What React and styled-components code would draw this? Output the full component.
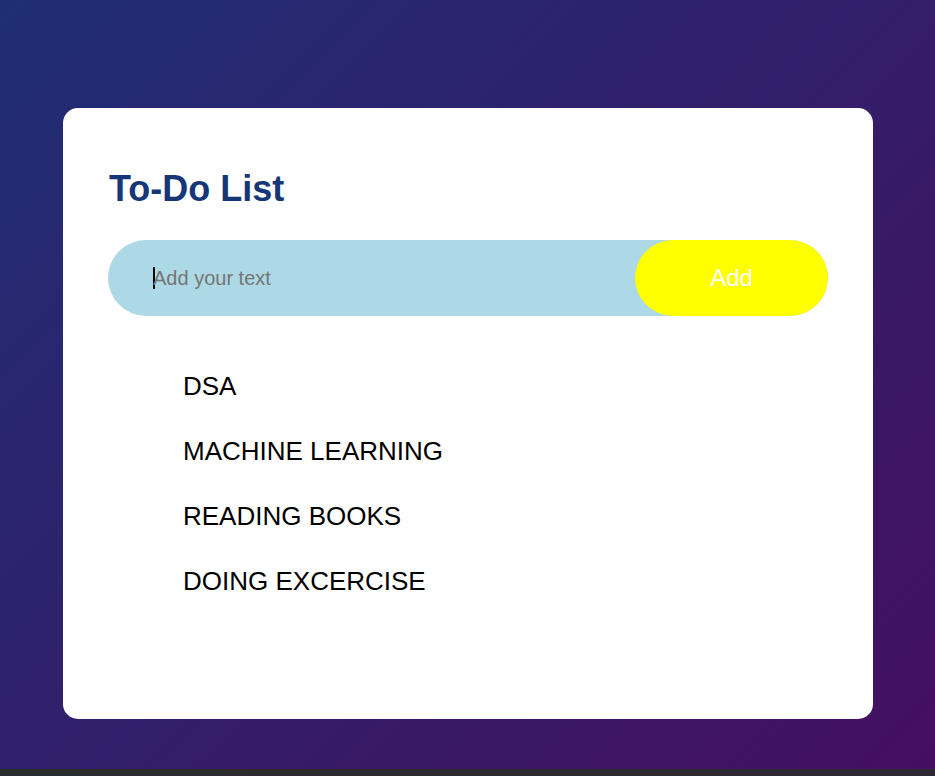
import React from "react";
import styled, { createGlobalStyle } from "styled-components";

const GlobalStyle = createGlobalStyle`
  * { box-sizing: border-box; }
  body {
    margin: 0;
    background: linear-gradient(90deg, #2b2d2c, #2c2733);
    font-family: "Liberation Sans", Arial, sans-serif;
  }
`;

const Page = styled.main`
  min-height: calc(100vh - 7px);
  padding: 108px 62px 50px 63px;
  background: linear-gradient(135deg, #1f2e74, #450f60);
`;

const Card = styled.section`
  max-width: 810px;
  margin: 0 auto;
  padding: 60px 45px 105px;
  border-radius: 15px;
  background: #fff;
`;

const Title = styled.h1`
  margin: 0 0 31px 1px;
  color: #153677;
  font-size: 36px;
  line-height: 41px;
`;

const AddForm = styled.form`
  display: flex;
  height: 76px;
  border-radius: 38px;
  background: #add8e6;
`;

const TextInput = styled.input`
  flex: 1;
  min-width: 0;
  padding: 0 0 0 45px;
  border: 0;
  outline: 0;
  background: transparent;
  color: #000;
  font: 20px "Liberation Sans", Arial, sans-serif;

  &::placeholder { color: #757575; }

  /* A bold caret while the field is empty */
  &:placeholder-shown:focus {
    caret-color: transparent;
    background: linear-gradient(#000, #000) 45px center / 2px 22px no-repeat;
  }
`;

const AddButton = styled.button`
  width: 193px;
  border: 0;
  border-radius: 38px;
  background: #ff0;
  color: #fff;
  font: 24px "Liberation Sans", Arial, sans-serif;
`;

const Tasks = styled.ul`
  margin: 38px 0 0;
  padding: 0 0 0 75px;
  list-style: none;
`;

const Task = styled.li`
  font-size: 26px;
  line-height: 65px;
`;

const tasks = ["DSA", "MACHINE LEARNING", "READING BOOKS", "DOING EXCERCISE"];

export default function App() {
  return (
    <>
      <GlobalStyle />
      <Page>
        <Card>
          <Title>To-Do List</Title>
          <AddForm onSubmit={(e) => e.preventDefault()}>
            <TextInput autoFocus type="text" placeholder="Add your text" aria-label="Add your text" />
            <AddButton type="submit">Add</AddButton>
          </AddForm>
          <Tasks>
            {tasks.map((task) => <Task key={task}>{task}</Task>)}
          </Tasks>
        </Card>
      </Page>
    </>
  );
}
